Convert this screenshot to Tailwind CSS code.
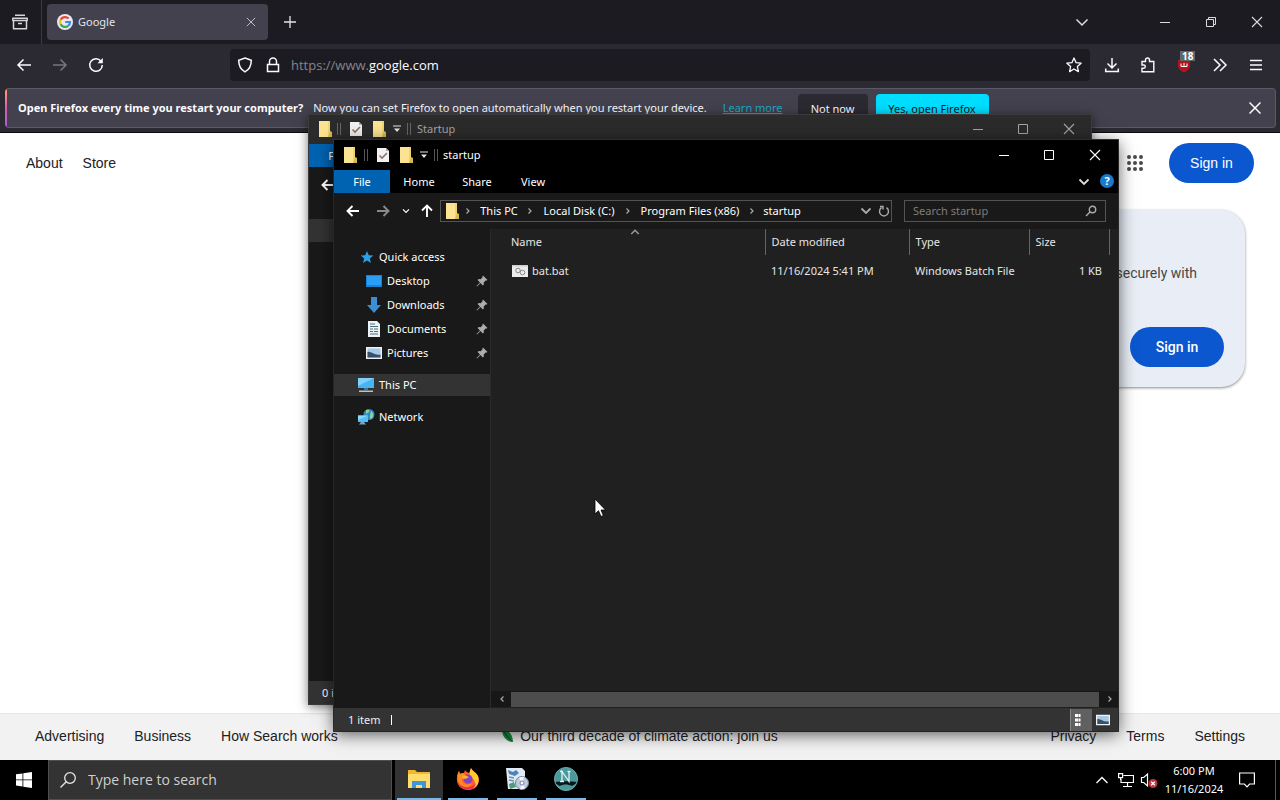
<!DOCTYPE html>
<html lang="en">
<head>
    <meta charset="UTF-8">
    <meta name="viewport" content="width=device-width, initial-scale=1.0">
    <title>Desktop</title>
    <script src="https://cdn.jsdelivr.net/npm/@tailwindcss/browser@4"></script>
</head>
<body class="relative w-full h-screen flex flex-col overflow-hidden bg-white font-['Noto_Sans','Segoe_UI',sans-serif] text-[11px] leading-4 cursor-default">
    <!--Shared icons-->
    <svg class="hidden">
        <symbol id="folder" viewBox="0 0 16 18"><path d="M2 1h11v11h2v5H2z" fill="#f3d36f"/><path d="M2 1h9v16H2z" fill="#fbe391"/><path d="M13 11l2 1v5h-4z" fill="#d9b84f"/></symbol>
        <symbol id="sheet" viewBox="0 0 14 16"><path d="M1 1h9l3 3v11H1z" fill="#f1f1f1"/><path d="M10 1l3 3h-3z" fill="#aaa"/><path d="M3.500 8.500l2.500 2.500 5-5" fill="none" stroke="#8d7468" stroke-width="1.600"/></symbol>
        <symbol id="menuArrow" viewBox="0 0 8 8"><path d="M0 .5h8v1H0zM1 3.500h6L4 7z" fill="#e6e6e6"/></symbol>
        <symbol id="arrowLeft" viewBox="0 0 14 12"><path d="M13 6H2M6.500 1L1.500 6l5 5" fill="none" stroke="currentColor" stroke-width="1.900"/></symbol>
        <symbol id="chevron" viewBox="0 0 12 12"><path d="M1.500 3.500L6 8l4.500-4.500" fill="none" stroke="currentColor" stroke-width="1.800"/></symbol>
        <symbol id="chevronRight" viewBox="0 0 6 8"><path d="M1.500 1.500L4 4 1.500 6.500" fill="none" stroke="currentColor" stroke-width="1.200"/></symbol>
        <symbol id="min" viewBox="0 0 12 12"><path d="M1 6.500h10" stroke="currentColor"/></symbol>
        <symbol id="max" viewBox="0 0 12 12"><path d="M1.500 1.500h9v9h-9z" fill="none" stroke="currentColor"/></symbol>
        <symbol id="close" viewBox="0 0 12 12"><path d="M1 1l10 10M11 1L1 11" stroke="currentColor" stroke-width="1.100"/></symbol>
        <symbol id="pin" viewBox="0 0 12 12"><path d="M7 .5L11.500 5l-1 .6-.8-.2-2 2 .2 2-1 1L4.500 8 1 11.500l-.5-.5L4 7.500 1.600 5.100l1-1 2 .2 2-2-.2-.8z" fill="#a9adb1"/></symbol>
        <symbol id="pc" viewBox="0 0 18 16"><path d="M1 1h16v10H1z" fill="#49b4f2"/><path d="M1 1h16L1 9z" fill="#7fd0fb"/><path d="M7 11h4v2H7z" fill="#2b7cb4"/><path d="M2 13.500h14V15H2z" fill="#b7c4cc"/></symbol>
        <symbol id="network" viewBox="0 0 18 18"><circle cx="12" cy="6.500" r="5.500" fill="#2b8bc9"/><path d="M9 2c3-1 4 1 3 2s-3 1-3 3M14 3c3 2 3 6 0 8-2-1-1-4 0-8z" fill="#8ed09a"/><path d="M1 7.500h10V14H1z" fill="#53bdf5"/><path d="M1 7.500h10L1 12z" fill="#8bd6fb"/><path d="M4 14h3l2 2.500H2z" fill="#6da9cc"/></symbol>
        <symbol id="picture" viewBox="0 0 16 12"><path d="M0 0h16v12H0z" fill="#edf2f7"/><path d="M1.500 1.500h13v9h-13z" fill="#a7c8e6"/><path d="M1.500 5c4-1 7 4 13 2.500v3h-13z" fill="#37516b"/></symbol>
    </svg>

    <!--Browser-->
    <div class="flex-1 min-h-0 flex flex-col text-[#fbfbfe]">
        <!--Tabs-->
        <div class="h-11 shrink-0 flex items-center bg-[#1c1b22]">
            <button class="w-[42px] h-11 flex items-center justify-center pr-0.5 border-r border-[#3a3944]" aria-label="Recent browsing">
                <svg class="size-4" viewBox="0 0 16 16" fill="none" stroke="#d5d5da" stroke-width="1.500" stroke-linejoin="round"><path d="M3 1.200h10M.8 4.200h14.400v2.300H.8zM1.500 6.500v8.300h13V6.500M6 9.500h4"/></svg>
            </button>
            <div class="ml-[5px] w-[221px] h-9 flex items-center px-2.5 gap-[5px] rounded bg-[#42414d]">
                <svg class="size-4 shrink-0" viewBox="0 0 16 16"><circle cx="8" cy="8" r="8" fill="#e8e9ef"/><g fill="none" stroke-width="2.200"><path d="M11.500 4.500A5 5 0 0 0 3.600 5.700" stroke="#ea4335"/><path d="M3.600 5.700a5 5 0 0 0 0 4.600" stroke="#fbbc05"/><path d="M3.600 10.300a5 5 0 0 0 7.600 1.500" stroke="#34a853"/><path d="M11.200 11.800A5 5 0 0 0 13 8H8.200" stroke="#4285f4"/></g></svg>
                <span class="flex-1 text-[11px] text-[#e4e4e8]">Google</span>
                <button class="mr-[1px]" aria-label="Close tab"><svg class="size-3 p-[1px] text-[#c9c9cf]"><use href="#close"/></svg></button>
            </div>
            <button class="ml-3.5" aria-label="New tab"><svg class="size-4" viewBox="0 0 16 16" stroke="#e4e4e8" stroke-width="1.300"><path d="M8 2v12M2 8h12"/></svg></button>
            <div class="ml-auto flex items-center text-[#dcdce0]">
                <button aria-label="List all tabs"><svg class="w-3.5 h-3.5" viewBox="0 0 14 14" fill="none" stroke="currentColor" stroke-width="1.500"><path d="M1.500 4.500L7 10l5.500-5.500"/></svg></button>
                <button class="ml-[70px]" aria-label="Minimize browser"><svg class="size-3"><use href="#min"/></svg></button>
                <button class="ml-[34px]" aria-label="Restore browser"><svg class="size-3" viewBox="0 0 12 12" fill="none" stroke="currentColor"><path d="M1.500 3.500h7v7h-7zM3.500 3.500v-2h7v7h-2"/></svg></button>
                <button class="ml-[34px] mr-[17px]" aria-label="Close browser"><svg class="size-3"><use href="#close"/></svg></button>
            </div>
        </div>

        <!--Toolbar-->
        <div class="h-11 shrink-0 flex items-center pb-0.5 bg-[#2b2a33]">
            <div class="w-[230px] shrink-0 flex items-center gap-5 pl-4">
                <button aria-label="Back"><svg class="size-4" viewBox="0 0 16 16" fill="none" stroke="currentColor" stroke-width="1.500"><path d="M15 8H2M7.500 2.500L2 8l5.500 5.500"/></svg></button>
                <button class="text-[#77767f]" aria-label="Forward"><svg class="size-4" viewBox="0 0 16 16" fill="none" stroke="currentColor" stroke-width="1.500"><path d="M1 8h13M8.500 2.500L14 8l-5.500 5.500"/></svg></button>
                <button aria-label="Reload"><svg class="size-4" viewBox="0 0 16 16" fill="none" stroke="currentColor" stroke-width="1.500"><path d="M13 4.200A6.300 6.300 0 1 0 14.300 8"/><path d="M14.800 1v5.300H9.500z" fill="currentColor" stroke="none"/></svg></button>
            </div>
            <div class="flex-1 h-8 flex items-center px-[7px] pr-2 rounded bg-[#1c1b22]">
                <svg class="size-4" viewBox="0 0 16 16" fill="none" stroke="currentColor" stroke-width="1.500"><path d="M8 1l6.300 2.200c0 5.300-1.800 9.300-6.300 11.600C3.500 12.500 1.700 8.500 1.700 3.200z"/></svg>
                <svg class="ml-3 size-4" viewBox="0 0 16 16" fill="none" stroke="currentColor" stroke-width="1.500"><path d="M2.500 7.500h11v7h-11zM4.500 7.500V4.600a3.500 3.500 0 0 1 7 0v2.900"/></svg>
                <span class="ml-2.5 flex-1 font-['Open_Sans',sans-serif] text-[13px]" role="textbox" aria-label="Address"><span class="text-[#85848d]">https://www.</span>google.com</span>
                <button aria-label="Bookmark"><svg class="size-4" viewBox="0 0 16 16" fill="none" stroke="currentColor" stroke-width="1.300" stroke-linejoin="round"><path d="M8 1l2.100 4.700 5 .5-3.700 3.400 1 5L8 12l-4.400 2.600 1-5L.9 6.200l5-.5z"/></svg></button>
            </div>
            <div class="flex items-center gap-5 pl-3.5 pr-4">
                <button aria-label="Downloads"><svg class="size-4" viewBox="0 0 16 16" fill="none" stroke="currentColor" stroke-width="1.500"><path d="M8 1v10M3.500 6.500L8 11l4.500-4.500M1.700 11.500v3h12.600v-3"/></svg></button>
                <button aria-label="Extensions"><svg class="size-4" viewBox="0 0 16 16" fill="none" stroke="currentColor" stroke-width="1.400"><path d="M2 4.500h3.500V3a2 2 0 0 1 4 0v1.500h4.300v10.300H2v-3.600h1.700a1.600 1.600 0 0 0 0-3.200H2z"/></svg></button>
                <button class="relative" aria-label="Blocked items">
                    <svg class="size-4" viewBox="0 0 16 16"><path d="M8 1.500l6 1.500v6c0 3-3 5-6 6.500C5 14 2 12 2 9V3z" fill="#b3131f"/><path d="M5 6.500v3h6v-3M8 6v3" fill="none" stroke="#fff"/></svg>
                    <span class="absolute -top-1.5 left-1 px-0.5 bg-[#5e6a68] text-[10px] leading-[10px] font-bold text-white">18</span>
                </button>
                <button aria-label="More tools"><svg class="size-4" viewBox="0 0 16 16" fill="none" stroke="currentColor" stroke-width="1.500"><path d="M2 2l6 6-6 6M8 2l6 6-6 6"/></svg></button>
                <button aria-label="Menu"><svg class="size-4" viewBox="0 0 16 16" stroke="currentColor" stroke-width="1.500"><path d="M2 3.500h12M2 8h12M2 12.500h12"/></svg></button>
            </div>
        </div>

        <!--Notification-->
        <div class="h-[45px] shrink-0 pl-[5px] pr-1 pb-[5px] bg-[#2b2a33] border-b border-[#0c0c0d]">
            <div class="h-10 flex overflow-hidden rounded-sm bg-[#42414d] border border-l-0 border-[#5a5965]">
                <div class="w-0.5 shrink-0 bg-linear-to-b from-[#ffa06a] via-[#e05aa8] to-[#a45be0]"></div>
                <p class="ml-[11px] flex items-center text-nowrap"><b>Open Firefox every time you restart your computer?</b><span class="ml-2.5">Now you can set Firefox to open automatically when you restart your device.</span><a href="#" class="ml-4 text-[#19a9c4] underline">Learn more</a></p>
                <button class="mt-[5px] ml-[15px] w-[70px] h-[30px] rounded bg-[#2b2a33]">Not now</button>
                <button class="mt-[5px] ml-2 w-[113px] h-[30px] rounded bg-[#00ddff] text-[#15141a]">Yes, open Firefox</button>
                <button class="ml-auto mr-3.5" aria-label="Dismiss"><svg class="size-3" viewBox="0 0 12 12" stroke="currentColor" stroke-width="1.500"><path d="M.5 .5l11 11M11.500 .5l-11 11"/></svg></button>
            </div>
        </div>

        <!--Page-->
        <div class="flex-1 min-h-0 flex flex-col bg-white text-sm text-[#202124] font-['Liberation_Sans',Arial,sans-serif]">
            <div class="flex items-center h-[60px] pl-[26px] pr-[26px]">
                <a href="#">About</a>
                <a href="#" class="ml-5">Store</a>
                <button class="ml-auto" aria-label="Google apps">
                    <svg class="size-4" viewBox="0 0 16 16" fill="#4a4b4f"><circle cx="2" cy="2" r="2"/><circle cx="8" cy="2" r="2"/><circle cx="14" cy="2" r="2"/><circle cx="2" cy="8" r="2"/><circle cx="8" cy="8" r="2"/><circle cx="14" cy="8" r="2"/><circle cx="2" cy="14" r="2"/><circle cx="8" cy="14" r="2"/><circle cx="14" cy="14" r="2"/></svg>
                </button>
                <button class="ml-[26px] w-[85px] h-10 rounded-full bg-[#0b57d0] text-white">Sign in</button>
            </div>
            <div class="mt-[17px] mr-[35px] self-end w-[320px] h-[177px] rounded-3xl bg-[#e9eef6] shadow-[0_1px_3px_#0007] flex flex-col items-end pt-[53px] pb-5 font-[Roboto,sans-serif]">
                <p class="mr-12 text-[#444746]">securely with</p>
                <button class="mt-auto mr-[21px] w-[94px] h-10 rounded-full bg-[#0b57d0] font-medium text-white">Sign in</button>
            </div>
            <footer class="mt-auto h-[47px] px-[35px] pb-0.5 grid grid-cols-[1fr_auto_1fr] items-center bg-[#f2f2f2] border-t border-[#e6e6e6]">
                <div class="flex gap-[30px]"><a href="#">Advertising</a><a href="#">Business</a><a href="#">How Search works</a></div>
                <a href="#" class="flex items-center gap-1"><svg class="size-3.5" viewBox="0 0 14 14"><path d="M0 0c6 1 11 5 11 13C4 13 0 7 0 0z" fill="#1e8e3e"/><path d="M0 0l11 13C6 11 3 6 0 0z" fill="#0b5d2b"/></svg>Our third decade of climate action: join us</a>
                <div class="flex gap-[30px] justify-end"><a href="#">Privacy</a><a href="#">Terms</a><a href="#">Settings</a></div>
            </footer>
        </div>
    </div>

    <!--Background explorer window-->
    <section class="absolute left-[308px] top-[114px] w-[784px] h-[591px] flex flex-col bg-[#191919] border border-[#3b3b3b] shadow-[0_2px_10px_#0008] text-white" aria-label="Startup">
        <div class="h-[29px] shrink-0 flex items-center pl-2 pb-0.5 bg-[#2b2b2b] text-[#a5a5a5]">
            <svg class="w-4 h-[18px]"><use href="#folder"/></svg>
            <span class="ml-1 w-1 h-3 border-x border-[#666]"></span>
            <svg class="ml-2 w-3.5 h-4"><use href="#sheet"/></svg>
            <svg class="ml-2 w-4 h-[18px]"><use href="#folder"/></svg>
            <svg class="ml-1.5 size-2"><use href="#menuArrow"/></svg>
            <span class="ml-1.5 mr-1.5 w-1 h-3 border-x border-[#666]"></span>
            <span>Startup</span>
            <button class="ml-auto" aria-label="Minimize"><svg class="size-3"><use href="#min"/></svg></button>
            <button class="ml-[33px]" aria-label="Maximize"><svg class="size-3"><use href="#max"/></svg></button>
            <button class="ml-[34px] mr-4" aria-label="Close"><svg class="size-3"><use href="#close"/></svg></button>
        </div>
        <div class="h-[23px] shrink-0 bg-black"><button class="w-14 h-[23px] bg-[#0063b1]">File</button></div>
        <div class="h-9 shrink-0 flex items-center pl-3"><svg class="w-3.5 h-3"><use href="#arrowLeft"/></svg></div>
        <div class="flex-1 flex flex-col w-[156px] pt-4">
            <div class="h-[23px] bg-[#333]"></div>
            <div class="mt-[105px] h-6 flex items-center pl-[23px]"><svg class="w-[18px] h-4"><use href="#pc"/></svg></div>
            <div class="mt-2 h-6 flex items-center pl-[23px]"><svg class="size-[18px]"><use href="#network"/></svg></div>
        </div>
        <div class="h-[23px] shrink-0 flex items-center pl-[13px] bg-[#333]">0 items</div>
    </section>

    <!--Front explorer window-->
    <section class="absolute left-[334px] top-[140px] w-[784px] h-[591px] flex flex-col bg-[#191919] shadow-[0_3px_16px_#000a,0_0_0_1px_#3b3b3b] text-white" aria-label="startup">
        <!--Title bar-->
        <div class="h-[30px] shrink-0 flex items-center pl-2 pb-[1px] bg-black">
            <svg class="w-4 h-[18px]"><use href="#folder"/></svg>
            <span class="ml-1.5 w-1 h-3 border-x border-[#555]"></span>
            <svg class="ml-2 w-3.5 h-4"><use href="#sheet"/></svg>
            <svg class="ml-2 w-4 h-[18px]"><use href="#folder"/></svg>
            <svg class="ml-1.5 size-2"><use href="#menuArrow"/></svg>
            <span class="ml-1.5 mr-[5px] w-1 h-3 border-x border-[#555]"></span>
            <span>startup</span>
            <button class="ml-auto" aria-label="Minimize"><svg class="size-3"><use href="#min"/></svg></button>
            <button class="ml-[33px]" aria-label="Maximize"><svg class="size-3"><use href="#max"/></svg></button>
            <button class="ml-[34px] mr-[17px]" aria-label="Close"><svg class="size-3"><use href="#close"/></svg></button>
        </div>

        <!--Ribbon tabs-->
        <div class="h-[23px] shrink-0 flex bg-black">
            <button class="w-14 bg-[#0063b1]">File</button>
            <button class="w-[58px]">Home</button>
            <button class="w-[58px]">Share</button>
            <button class="w-[54px]">View</button>
            <button class="ml-auto text-[#ddd]" aria-label="Expand ribbon"><svg class="size-3"><use href="#chevron"/></svg></button>
            <button class="ml-2.5 mr-1 my-1 size-3.5 rounded-full bg-[#1979ca] font-bold leading-3" aria-label="Help">?</button>
        </div>

        <!--Address bar-->
        <div class="h-9 shrink-0 flex items-center pl-3 pr-3">
            <button aria-label="Back"><svg class="w-3.5 h-3"><use href="#arrowLeft"/></svg></button>
            <button class="ml-4 text-[#8a8a8a]" aria-label="Forward"><svg class="w-3.5 h-3 rotate-180"><use href="#arrowLeft"/></svg></button>
            <button class="ml-3" aria-label="Recent locations"><svg class="size-2"><use href="#chevron"/></svg></button>
            <button class="ml-2.5" aria-label="Up"><svg class="w-3.5 h-3 rotate-90"><use href="#arrowLeft"/></svg></button>
            <nav class="ml-1.5 flex-1 h-[22px] flex items-center pl-[3px] border border-[#535353] text-nowrap" aria-label="Path">
                <svg class="w-4 h-[18px]"><use href="#folder"/></svg>
                <svg class="ml-[5px] w-1.5 h-2 text-[#aaa]"><use href="#chevronRight"/></svg>
                <button class="w-14">This PC</button>
                <svg class="w-1.5 h-2 text-[#aaa]"><use href="#chevronRight"/></svg>
                <button class="w-[92px]">Local Disk (C:)</button>
                <svg class="w-1.5 h-2 text-[#aaa]"><use href="#chevronRight"/></svg>
                <button class="w-[118px]">Program Files (x86)</button>
                <svg class="w-1.5 h-2 text-[#aaa]"><use href="#chevronRight"/></svg>
                <button class="w-[54px]">startup</button>
                <button class="ml-auto text-[#aaa]" aria-label="Previous locations"><svg class="size-3"><use href="#chevron"/></svg></button>
                <button class="ml-1.5 mr-[1px]" aria-label="Refresh"><svg class="size-3" viewBox="0 0 12 12" fill="none" stroke="#aaa" stroke-width="1.400"><path d="M8.500 2.700a4.500 4.500 0 1 1-5 0M2 1.500h3v3"/></svg></button>
            </nav>
            <label class="ml-3 w-[202px] h-[22px] flex items-center px-2 border border-[#535353]">
                <input type="text" class="flex-1 min-w-0 outline-none placeholder:text-[#7d7d7d]" placeholder="Search startup" aria-label="Search startup">
                <svg class="size-3" viewBox="0 0 12 12" fill="none" stroke="#aaa" stroke-width="1.400"><circle cx="7.500" cy="4.500" r="3.200"/><path d="M5.200 6.800L1 11"/></svg>
            </label>
        </div>

        <div class="flex-1 min-h-0 flex">
            <!--Navigation pane-->
            <nav class="w-[157px] shrink-0 flex flex-col pt-4 border-r border-[#2b2b2b]" aria-label="Folders">
                <a href="#" class="h-6 flex items-center pl-[26px] gap-[5px]"><svg class="size-3.5" viewBox="0 0 14 14"><path d="M7 1l1.800 4.200 4.500.4-3.500 2.800 1.200 4.600L7 10.500 3 13l1.200-4.600L.7 5.600l4.500-.4z" fill="#2aa0e8"/></svg>Quick access</a>
                <a href="#" class="h-6 flex items-center pl-8 pr-0.5 gap-[5px]"><svg class="size-4" viewBox="0 0 16 16"><path d="M0 2h16v12H0z" fill="#1583d8"/><path d="M1 3h14v9H1z" fill="#2a9df4"/></svg>Desktop<svg class="ml-auto size-3"><use href="#pin"/></svg></a>
                <a href="#" class="h-6 flex items-center pl-8 pr-0.5 gap-[5px]"><svg class="size-4" viewBox="0 0 16 16"><path d="M5 0h6v8h4l-7 8-7-8h4z" fill="#3d8fd3"/></svg>Downloads<svg class="ml-auto size-3"><use href="#pin"/></svg></a>
                <a href="#" class="h-6 flex items-center pl-8 pr-0.5 gap-[5px]"><svg class="size-4" viewBox="0 0 16 16"><path d="M2 0h9l3 3v13H2z" fill="#eef2f5"/><path d="M4 3h5M4 5.500h8M4 8h3M8 8h4M4 10.500h3M8 10.500h4M4 13h8" stroke="#4a7087"/></svg>Documents<svg class="ml-auto size-3"><use href="#pin"/></svg></a>
                <a href="#" class="h-6 flex items-center pl-8 pr-0.5 gap-[5px]"><svg class="w-4 h-3"><use href="#picture"/></svg>Pictures<svg class="ml-auto size-3"><use href="#pin"/></svg></a>
                <a href="#" class="mt-[9px] mb-[9px] h-[22px] flex items-center pl-[23px] gap-1 bg-[#333]"><svg class="w-[18px] h-4"><use href="#pc"/></svg>This PC</a>
                <a href="#" class="h-6 flex items-center pl-[23px] gap-1"><svg class="size-[18px]"><use href="#network"/></svg>Network</a>
            </nav>

            <!--File list-->
            <div class="flex-1 min-w-0 flex flex-col bg-[#202020]">
                <table class="ml-3.5 table-fixed w-[604px] text-left text-[#e6e6e6]">
                    <thead>
                        <tr class="h-[26px]">
                            <th class="relative w-[260px] pl-1.5 font-normal border-r border-[#636363]">Name<svg class="absolute -top-0.5 left-[125px] size-2.5 rotate-180 text-[#999]"><use href="#chevron"/></svg></th>
                            <th class="w-36 pl-1.5 font-normal border-r border-[#636363]">Date modified</th>
                            <th class="w-[120px] pl-1.5 font-normal border-r border-[#636363]">Type</th>
                            <th class="w-20 pl-1.5 font-normal border-r border-[#636363]">Size</th>
                        </tr>
                    </thead>
                    <tbody>
                        <tr class="h-8 text-nowrap">
                            <td class="pl-[7px]"><span class="flex items-center gap-1"><svg class="size-4" viewBox="0 0 16 16"><path d="M0 2h16v12H0z" fill="#ececec"/><path d="M0 2h16v1.500H0z" fill="#cfcfcf"/><g fill="none" stroke="#888"><circle cx="6" cy="7.500" r="2.300"/><circle cx="10.500" cy="9.500" r="2.300"/></g></svg>bat.bat</span></td>
                            <td class="pl-1.5">11/16/2024 5:41 PM</td>
                            <td class="pl-1.5">Windows Batch File</td>
                            <td class="pr-[7px] text-right">1 KB</td>
                        </tr>
                    </tbody>
                </table>
                <div class="mt-auto mb-[1px] h-4 flex items-center bg-[#171717] pl-2 text-[#aaa]">
                    <svg class="w-1.5 h-2 rotate-180"><use href="#chevronRight"/></svg>
                    <div class="flex-1 h-[15px] mx-1.5 bg-[#4d4d4d]"></div>
                    <svg class="mr-[5px] ml-0.5 w-1.5 h-2"><use href="#chevronRight"/></svg>
                </div>
            </div>
        </div>

        <!--Status bar-->
        <div class="h-[23px] shrink-0 flex items-center pl-3.5 bg-[#333] text-[#eee]">
            <span>1 item</span><span class="ml-[11px] w-[1px] h-2.5 bg-white"></span>
            <button class="ml-auto w-[22px] h-[22px] flex items-center justify-center pr-2 bg-[#606060] border-l border-[#888]" aria-label="Details view"><svg class="w-3 h-3.5" viewBox="0 0 12 14"><path d="M3 1h3v3H3zM3 5.500h3v3H3zM3 10h3v3H3zM6.500 1h2v3h-2zM6.500 5.500h2v3h-2zM6.500 10h2v3h-2z" fill="#fff"/></svg></button>
            <button class="ml-1 mr-2" aria-label="Large icons"><svg class="w-3.5 h-3"><use href="#picture"/></svg></button>
        </div>
    </section>

    <!--Mouse pointer-->
    <svg class="absolute left-[594px] top-[498px] w-3 h-5" viewBox="0 0 12 20"><path d="M1 1v15l3.500-3.300L7 18.500l2.300-1L7 12h4.500z" fill="#fff" stroke="#000" stroke-width=".8"/></svg>

    <!--Taskbar-->
    <div class="relative h-10 shrink-0 flex bg-black text-white">
        <button class="w-12 flex items-center justify-center" aria-label="Start"><svg class="size-4" viewBox="0 0 16 16" fill="#fff"><path d="M0 2.300L6.500 1.400v6.100H0zM7.300 1.300L16 0v7.500H7.300zM0 8.300h6.500v6.200L0 13.600zM7.300 8.300H16V16l-8.700-1.300z"/></svg></button>
        <label class="w-[344px] flex items-center pl-[11px] gap-3 bg-[#333] border border-[#4f4f4f]">
            <svg class="size-4" viewBox="0 0 16 16" fill="none" stroke="#e6e6e6" stroke-width="1.300"><circle cx="10" cy="6" r="5.300"/><path d="M6.200 9.800L.5 15.500"/></svg>
            <input type="text" class="flex-1 outline-none font-['Open_Sans',sans-serif] text-sm placeholder:text-[#cfcfcf]" placeholder="Type here to search" aria-label="Type here to search">
        </label>
        <div class="ml-[3px] flex gap-[1px]">
            <button class="w-12 flex flex-col items-center bg-[#333]" aria-label="File Explorer">
                <svg class="my-auto w-6 h-5" viewBox="0 0 24 20"><path d="M1 1h7l2 2h13v16H1z" fill="#f2b630"/><path d="M1 5h22v14H1z" fill="#ffdc6b"/><path d="M5 19v-7h14v7h-4v-3H9v3z" fill="#3d95dc"/></svg>
                <span class="w-11 h-0.5 bg-[#76b9ed]"></span>
            </button>
            <button class="w-12 flex flex-col items-center" aria-label="Firefox">
                <svg class="my-auto size-6" viewBox="0 0 24 24"><path d="M15 1c1 3 5 4 7 8 3 7-2 14-10 14S0 17 1 10c0-3 1-4 2-6l1 3c1-1 3-1 4-1l1-3c1 2 3 2 4 3 1-1 2-3 2-5z" fill="#ff5a2b"/><path d="M15 1c1 3 5 4 7 8 2 6-1 10-4 12 2-4 1-8-2-10s-3-6-1-10z" fill="#ffca2f"/><path d="M3 4l1 3c1-1 3-1 4-1l1 3-3 3c0 5 6 7 10 4-2 6-13 6-14-3-1-4 0-7 1-9z" fill="#ff8a1f"/><circle cx="12" cy="12" r="4.500" fill="#8143c9"/><path d="M6 9c3-1 5 0 7 1-2 1-3 2-6 2z" fill="#ffb02b"/><path d="M2 15c4 7 13 7 18 1-2 9-15 9-18-1z" fill="#f0285a"/></svg>
                <span class="w-10 h-0.5 bg-[#76b9ed]"></span>
            </button>
            <button class="w-12 flex flex-col items-center" aria-label="Setup">
                <svg class="my-auto size-6" viewBox="0 0 24 24"><path d="M1 1h16l3 3v18H3z" fill="#dfeaf4"/><path d="M3 3l5 2 3-2 3 3-4 3-6-2z" fill="#4b83b7"/><path d="M4 10l5 1M4 13l5 1" stroke="#6c93b5" stroke-width="1.500"/><path d="M4 17l5-2 2 5-6 2z" fill="#4f9b78"/><circle cx="17" cy="16" r="6.500" fill="#bfc9e2" stroke="#75829c"/><path d="M17 16l-3-5a6 6 0 0 1 5-1zM17 16l3 5a6 6 0 0 1-5 1z" fill="#f4f7fd"/><circle cx="17" cy="16" r="2" fill="#fff" stroke="#75829c"/></svg>
                <span class="w-10 h-0.5 bg-[#76b9ed]"></span>
            </button>
            <button class="w-12 flex flex-col items-center" aria-label="Netscape">
                <svg class="my-auto size-6" viewBox="0 0 24 24"><circle cx="12" cy="12" r="11.500" fill="#4a9a9c"/><path d="M1 15c7-1 15-1 22 0-1 2-4 3-5 4-4-2-9-2-12 0-2-1-4-2-5-4z" fill="#06161b"/><path d="M6 4.500h3M8 14.500V4.500l7 10V4.500M13.500 4.500h3M6 14.500h4" fill="none" stroke="#e5f3f3" stroke-width="1.300"/><circle cx="12" cy="12" r="11.500" fill="none" stroke="#6fa9aa"/></svg>
                <span class="w-10 h-0.5 bg-[#76b9ed]"></span>
            </button>
        </div>
        <div class="ml-auto flex items-center">
            <button aria-label="Show hidden icons"><svg class="w-3 h-2" viewBox="0 0 12 8" fill="none" stroke="#fff" stroke-width="1.300"><path d="M.5 7L6 1.500 11.500 7"/></svg></button>
            <button class="ml-2.5" aria-label="Network status"><svg class="size-4" viewBox="0 0 16 16" fill="none" stroke="#fff" stroke-width="1.200"><path d="M5.500 3.500h10v7H3V7M9.500 10.500V14M5 14.500h9M.6 1.600h4v4h-4zM2.600 5.600V8"/></svg></button>
            <button class="ml-1.5" aria-label="Volume"><svg class="w-[18px] h-4" viewBox="0 0 18 16"><path d="M1.500 5.500h2.200L7.500 2v12l-3.800-3.500H1.500z" fill="none" stroke="#fff" stroke-width="1.200"/><circle cx="13" cy="11.500" r="4.500" fill="#c8323c"/><path d="M11.200 9.700l3.600 3.600M14.800 9.700l-3.600 3.600" stroke="#fff" stroke-width="1.300"/></svg></button>
            <button class="ml-[5px] w-[62px] leading-[18px] text-nowrap">6:00 PM<br>11/16/2024</button>
            <button class="ml-3.5 mr-5" aria-label="Notifications"><svg class="w-4 h-4" viewBox="0 0 16 16" fill="none" stroke="#fff" stroke-width="1.200"><path d="M.6 1h14.800v11h-4.800L8 14.800 5.400 12H.6z"/></svg></button>
            <span class="mr-1 w-[1px] h-10 bg-[#555]"></span>
        </div>
    </div>
</body>
</html>
